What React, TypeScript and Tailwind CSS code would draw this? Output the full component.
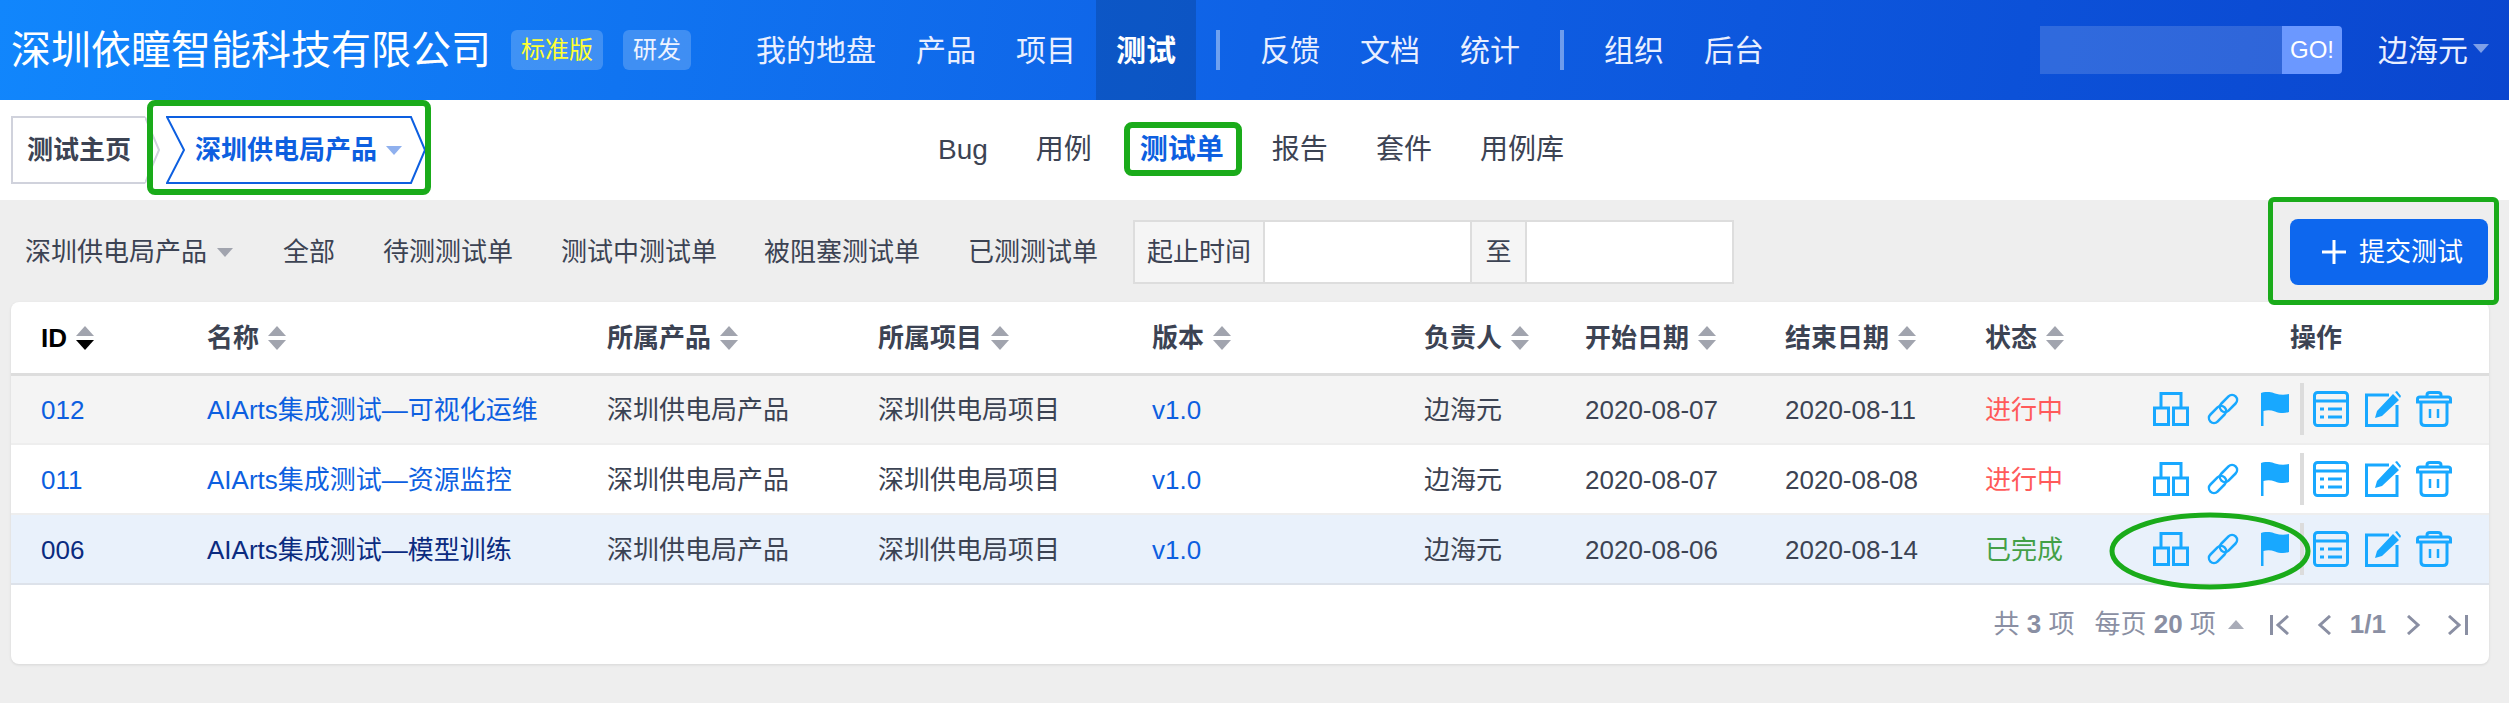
const rows = [
  { id: '012', name: 'AIArts集成测试—可视化运维', start: '2020-08-07', end: '2020-08-11', status: '进行中', rowBg: 'bg-[#f4f4f4]', linkColor: 'text-[#0d5fe0]', statusColor: 'text-[#ff5a5a]' },
  { id: '011', name: 'AIArts集成测试—资源监控', start: '2020-08-07', end: '2020-08-08', status: '进行中', rowBg: 'bg-white', linkColor: 'text-[#0d5fe0]', statusColor: 'text-[#ff5a5a]' },
  { id: '006', name: 'AIArts集成测试—模型训练', start: '2020-08-06', end: '2020-08-14', status: '已完成', rowBg: 'bg-[#e9f1fb]', linkColor: 'text-[#0b2b80]', statusColor: 'text-[#43a047]' },
];

const columns = ['名称', '所属产品', '所属项目', '版本', '负责人', '开始日期', '结束日期', '状态'];

function SortCaret({ active }: { active?: boolean }) {
  return (
    <svg width="18" height="24" viewBox="0 0 18 24" className="ml-[9px] shrink-0">
      <path d="M9 0 L18 10 L0 10 Z" fill="#a1a4ae" />
      <path d="M0 14 L18 14 L9 24 Z" fill={active ? '#000000' : '#a1a4ae'} />
    </svg>
  );
}

function Caret({ color, up }: { color: string; up?: boolean }) {
  return (
    <svg width="16" height="9" viewBox="0 0 16 9" className="shrink-0">
      <path d={up ? 'M8 0 L16 9 L0 9 Z' : 'M0 0 L16 0 L8 9 Z'} fill={color} />
    </svg>
  );
}

function ActionIcons() {
  const c = '#18a8ff';
  return (
    <div className="flex items-center pl-[10px]">
      <svg width="36" height="34" viewBox="0 0 36 34" fill="none" stroke={c} strokeWidth="3">
        <rect x="1.5" y="16" width="14" height="16.5" />
        <rect x="20.5" y="16" width="14" height="16.5" />
        <path d="M8 16 V1.5 H28 V16" />
      </svg>
      <svg width="32" height="32" viewBox="0 0 32 32" fill="none" stroke={c} strokeWidth="2.5" className="ml-[18px]">
        <rect x="0.5" y="16.5" width="20" height="10" rx="5" transform="rotate(-45 10.5 21.5)" />
        <rect x="11.5" y="5.5" width="20" height="10" rx="5" transform="rotate(-45 21.5 10.5)" />
      </svg>
      <svg width="28" height="34" viewBox="0 0 28 34" className="ml-[22px]">
        <path d="M0 1 C6 -1 10 0 14 1.5 C19 3 24 3 28 2 V20 C23 22 18 21 14 19.5 C10 18 6 18 2.5 19 V34 H0 Z" fill={c} />
      </svg>
      <div className="ml-[11px] h-[52px] w-[4px] bg-[#dcdcdc]" />
      <svg width="36" height="36" viewBox="0 0 36 36" fill="none" stroke={c} strokeWidth="3" className="ml-[9px]">
        <rect x="1.5" y="1.5" width="33" height="33" rx="3" />
        <path d="M1.5 10 H34.5" />
        <path d="M15 18 H29 M15 26 H29 M7 18 H11 M7 26 H11" />
      </svg>
      <svg width="36" height="36" viewBox="0 0 36 36" fill="none" className="ml-[16px]">
        <path d="M24 4 H1.5 V34.5 H32 V14" stroke={c} strokeWidth="3" />
        <path d="M10 27 L12 20 L28 3 L34 9 L17 25 Z M30 1 L32 0 L36 5 L35 7 Z" fill={c} />
      </svg>
      <svg width="36" height="36" viewBox="0 0 36 36" fill="none" stroke={c} strokeWidth="3" className="ml-[15px]">
        <path d="M1.5 11 V8 Q1.5 6 4 6 H32 Q34.5 6 34.5 8 V11 Z" />
        <path d="M11 6 V4 Q11 1.5 14 1.5 H22 Q25 1.5 25 4 V6" />
        <path d="M5 11 V31 Q5 34.5 9 34.5 H27 Q31 34.5 31 31 V11" />
        <path d="M14 18 V27 M22 18 V27" strokeWidth="2.5" />
      </svg>
    </div>
  );
}

function PagerIcon({ d, w }: { d: string; w: number }) {
  return (
    <svg width={w} height="20" viewBox={`0 0 ${w} 20`} fill="none" stroke="#8a8fa3" strokeWidth="3" className="shrink-0">
      <path d={d} />
    </svg>
  );
}

export default function App() {
  return (
    <div className="relative min-h-[703px] w-[2509px] overflow-hidden bg-[#eeeeee] font-['Liberation_Sans','Noto_Sans_CJK_SC',sans-serif] text-[26px] text-[#3c4353]">
      <header className="flex h-[100px] items-center bg-[linear-gradient(100deg,#1186fc_0%,#0f62e6_50%,#0a46cf_100%)] pl-[11px] pr-[20px] text-white">
        <div className="text-[40px] leading-none">深圳依瞳智能科技有限公司</div>
        <span className="ml-[20px] flex h-[40px] items-center rounded-[6px] bg-white/20 px-[10px] text-[24px] text-[#ffff33]">标准版</span>
        <span className="ml-[20px] flex h-[40px] items-center rounded-[6px] bg-white/20 px-[10px] text-[24px] text-[#eef3ff]">研发</span>
        <nav className="ml-[45px] flex h-full items-center text-[30px] text-[#e9efff]">
          <a className="px-5">我的地盘</a>
          <a className="px-5">产品</a>
          <a className="px-5">项目</a>
          <a className="flex h-full items-center bg-black/15 px-5 font-bold text-white">测试</a>
          <div className="mx-5 h-[40px] w-[4px] bg-white/40" />
          <a className="px-5">反馈</a>
          <a className="px-5">文档</a>
          <a className="px-5">统计</a>
          <div className="mx-5 h-[40px] w-[4px] bg-white/40" />
          <a className="px-5">组织</a>
          <a className="px-5">后台</a>
        </nav>
        <div className="ml-auto flex h-[48px] items-stretch">
          <div className="w-[242px] bg-white/15" />
          <div className="flex w-[60px] items-center justify-center rounded-r-[4px] bg-[#6b98ff] text-[24px]">GO!</div>
        </div>
        <div className="ml-[36px] flex items-center text-[30px] text-[#e9efff]">
          边海元
          <span className="ml-[5px] mb-[4px]"><Caret color="#7d9fe8" /></span>
        </div>
      </header>

      <div className="flex h-[100px] items-center bg-white pl-[11px]">
        <div className="flex h-[68px] w-[149px] items-center">
          <div className="flex h-full w-[134px] items-center border-y-2 border-l-2 border-[#d0d2dc] pl-[14px] font-bold">测试主页</div>
          <svg width="15" height="68" viewBox="0 0 15 68" fill="none" stroke="#d0d2dc" strokeWidth="2" className="shrink-0">
            <path d="M0 1 L14 34 L0 67" />
          </svg>
        </div>
        <div className="relative ml-[6px] flex h-[68px] w-[260px] items-center pl-[29px] font-bold text-[#0d5fe0]">
          <svg width="260" height="68" viewBox="0 0 260 68" fill="none" stroke="#0d5fe0" strokeWidth="2" className="absolute left-0 top-0">
            <path d="M1 1 H245 L259 34 L245 67 H1 L18 34 Z" />
          </svg>
          <span className="relative">深圳供电局产品</span>
          <span className="relative ml-[9px]"><Caret color="#8fb0ee" /></span>
        </div>
        <nav className="ml-[488px] flex text-[28px]">
          <a className="px-6">Bug</a>
          <a className="px-6">用例</a>
          <a className="px-6 font-bold text-[#0d5fe0]">测试单</a>
          <a className="px-6">报告</a>
          <a className="px-6">套件</a>
          <a className="px-6">用例库</a>
        </nav>
      </div>

      <div className="flex h-[102px] items-center pl-[25px] pr-[21px] pt-[2px]">
        <div className="flex items-center">
          深圳供电局产品
          <span className="ml-[10px]"><Caret color="#a1a4ae" /></span>
        </div>
        <a className="ml-[50px]">全部</a>
        <a className="ml-[48px]">待测测试单</a>
        <a className="ml-[48px]">测试中测试单</a>
        <a className="ml-[47px]">被阻塞测试单</a>
        <a className="ml-[48px]">已测测试单</a>
        <div className="ml-[35px] flex h-[64px] items-stretch">
          <div className="flex w-[132px] items-center justify-center border-2 border-[#dddddd] bg-[#f5f5f5]">起止时间</div>
          <div className="w-[205px] border-y-2 border-[#dddddd] bg-white" />
          <div className="flex w-[57px] items-center justify-center border-2 border-[#dddddd] bg-[#f5f5f5]">至</div>
          <div className="w-[207px] border-y-2 border-r-2 border-[#dddddd] bg-white" />
        </div>
        <button className="ml-auto flex h-[66px] w-[198px] items-center rounded-[8px] bg-[#0d67ee] pl-[32px] text-white">
          <svg width="24" height="24" viewBox="0 0 24 24" stroke="#ffffff" strokeWidth="3">
            <path d="M12 0 V24 M0 12 H24" />
          </svg>
          <span className="ml-[13px]">提交测试</span>
        </button>
      </div>

      <div className="ml-[11px] w-[2478px] rounded-[8px] bg-white shadow-[0_1px_3px_rgba(0,0,0,0.1)]">
        <table className="w-full table-fixed border-collapse text-left">
          <colgroup>
            <col className="w-[166px]" />
            <col className="w-[400px]" />
            <col className="w-[271px]" />
            <col className="w-[274px]" />
            <col className="w-[272px]" />
            <col className="w-[161px]" />
            <col className="w-[200px]" />
            <col className="w-[200px]" />
            <col className="w-[188px]" />
            <col className="w-[346px]" />
          </colgroup>
          <thead>
            <tr className="h-[72px] border-b-[3px] border-[#dddddd]">
              <th className="pl-[30px] pt-[2px] font-bold text-black">
                <div className="flex items-center">ID<SortCaret active /></div>
              </th>
              {columns.map((c) => (
                <th key={c} className="pl-[30px] pt-[2px] font-bold">
                  <div className="flex items-center">{c}<SortCaret /></div>
                </th>
              ))}
              <th className="pt-[2px] text-center font-bold">操作</th>
            </tr>
          </thead>
          <tbody>
            {rows.map((r) => (
              <tr key={r.id} className={`h-[70px] border-b-2 border-[#eeeeee] last:border-[#dde2ea] ${r.rowBg}`}>
                <td className={`pl-[30px] pt-[2px] ${r.linkColor}`}>{r.id}</td>
                <td className={`pl-[30px] pt-[2px] ${r.linkColor}`}>{r.name}</td>
                <td className="pl-[30px] pt-[2px]">深圳供电局产品</td>
                <td className="pl-[30px] pt-[2px]">深圳供电局项目</td>
                <td className="pl-[30px] pt-[2px] text-[#0d5fe0]">v1.0</td>
                <td className="pl-[30px] pt-[2px]">边海元</td>
                <td className="pl-[30px] pt-[2px]">{r.start}</td>
                <td className="pl-[30px] pt-[2px]">{r.end}</td>
                <td className={`pl-[30px] pt-[2px] ${r.statusColor}`}>{r.status}</td>
                <td><ActionIcons /></td>
              </tr>
            ))}
          </tbody>
        </table>
        <div className="flex h-[79px] items-center justify-end pr-[21px] text-[#8a8fa3]">
          <span>共 <b>3</b> 项</span>
          <span className="ml-[20px]">每页 <b>20</b> 项</span>
          <span className="ml-[12px]"><Caret color="#a9acb8" up /></span>
          <span className="ml-[26px]"><PagerIcon w={19} d="M1.5 0 V20 M18 1 L8 10 L18 19" /></span>
          <span className="ml-[28px]"><PagerIcon w={15} d="M13 1 L3 10 L13 19" /></span>
          <b className="ml-[18px]">1/1</b>
          <span className="ml-[20px]"><PagerIcon w={15} d="M2 1 L12 10 L2 19" /></span>
          <span className="ml-[27px]"><PagerIcon w={20} d="M1 1 L11 10 L1 19 M18.5 0 V20" /></span>
        </div>
      </div>

      {/* green hand-drawn annotations on top of the screenshot */}
      <div className="absolute left-[147px] top-[100px] h-[95px] w-[284px] rounded-[8px] border-[6px] border-[#1aab1a]" />
      <div className="absolute left-[1124px] top-[122px] h-[54px] w-[118px] rounded-[8px] border-[6px] border-[#1aab1a]" />
      <div className="absolute left-[2268px] top-[197px] h-[108px] w-[231px] rounded-[6px] border-[5px] border-[#1aab1a]" />
      <svg width="204" height="78" viewBox="0 0 204 78" fill="none" className="absolute left-[2108px] top-[512px]">
        <ellipse cx="102" cy="39" rx="98" ry="36" stroke="#1aab1a" strokeWidth="5" />
      </svg>
    </div>
  );
}
